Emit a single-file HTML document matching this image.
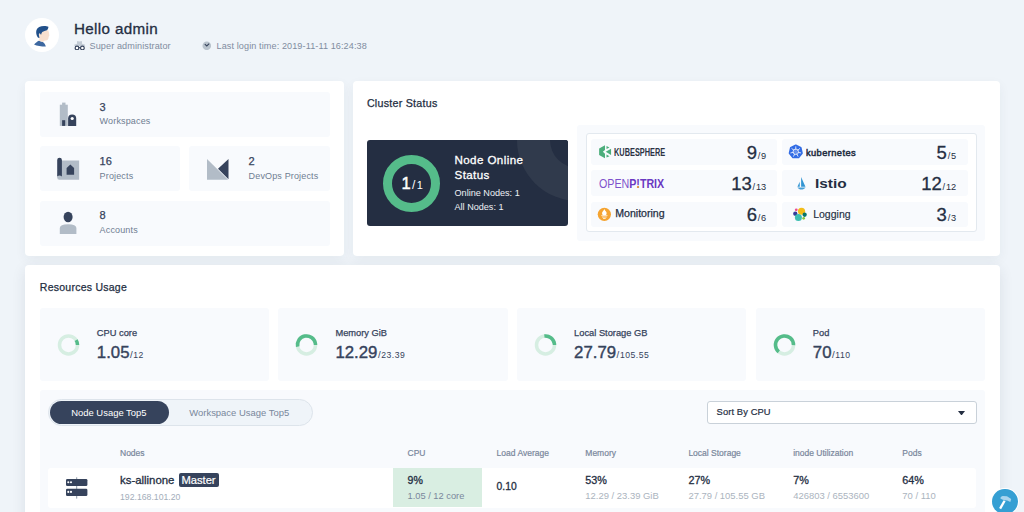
<!DOCTYPE html>
<html><head><meta charset="utf-8">
<style>
*{box-sizing:border-box;margin:0;padding:0}
html,body{width:1024px;height:512px;overflow:hidden}
body{background:#eff4f9;font-family:"Liberation Sans",sans-serif;color:#242e42;position:relative}
.a{position:absolute;display:block}
.t{position:absolute;white-space:nowrap;line-height:1}
</style></head>
<body>
<div class="a" style="left:25px;top:18px;width:34.3px;height:34.3px;border-radius:50%;background:#fff"></div>
<svg class="a" style="left:25px;top:18px;" width="34.3" height="34.3" viewBox="-106.7 -85.3 731.7 731.7">
<path d="M87 480 C120 440 160 410 190 398 L272 425 C302 445 325 475 337 525 C260 527 150 512 87 480Z" fill="#3d68a0"/>
<path d="M185 300 C180 260 190 235 215 235 C240 215 270 200 300 192 C340 182 370 175 390 178 C405 220 410 260 412 292 C400 302 396 322 393 350 C386 382 345 396 305 400 C290 410 280 422 272 425 L188 398 C205 375 205 340 185 300Z" fill="#f8e0cf"/>
<path d="M172 338 C135 290 122 230 138 172 C158 110 220 84 300 84 C340 84 372 90 392 102 C394 127 382 156 362 176 C330 192 292 197 262 212 C248 228 243 250 235 278 C225 258 215 242 200 240 C185 245 185 290 205 335Z" fill="#21508a"/>
</svg>
<div class="t" style="left:74.00px;top:20.98px;font-size:15.2px;color:#242e42;font-weight:400;-webkit-text-stroke:0.3px #242e42;letter-spacing:0.35px">Hello admin</div>
<svg class="a" style="left:74px;top:40px;" width="11" height="10" viewBox="0 0 11 10">
<path d="M3.2 1.1 L5.5 1.6 L7.8 1.1 L8.2 3.9 L10.8 4.6 L10.8 5.9 L0.4 5.9 L0.4 4.6 L2.8 3.9Z" fill="#c2cbd5"/>
<circle cx="3" cy="7.9" r="1.85" fill="#fff" stroke="#36435c" stroke-width="1.15"/>
<circle cx="8.4" cy="7.9" r="1.85" fill="#fff" stroke="#36435c" stroke-width="1.15"/>
<path d="M4.9 7.6 L6.5 7.6" stroke="#36435c" stroke-width="1"/>
</svg>
<div class="t" style="left:89.50px;top:41.56px;font-size:9.1px;color:#7f8ca0;font-weight:400;letter-spacing:0.1px">Super administrator</div>
<svg class="a" style="left:201.5px;top:40.6px;" width="9.6" height="9.6" viewBox="0 0 10 10">
<circle cx="5" cy="5" r="4.5" fill="#b9c3cd"/>
<path d="M2.9 3.2 L5 5.2 L7.5 2.7" fill="none" stroke="#36435c" stroke-width="1.1"/>
</svg>
<div class="t" style="left:216.50px;top:41.56px;font-size:9.1px;color:#7f8ca0;font-weight:400;letter-spacing:0.1px">Last login time: 2019-11-11 16:24:38</div>
<div class="a" style="left:25px;top:81px;width:319.3px;height:175px;background:#fff;border-radius:4px;box-shadow:0 4px 12px rgba(36,46,66,0.055)"></div>
<div class="a" style="left:353px;top:81px;width:647px;height:175px;background:#fff;border-radius:4px;box-shadow:0 4px 12px rgba(36,46,66,0.055)"></div>
<div class="a" style="left:25px;top:265px;width:974.5px;height:270px;background:#fff;border-radius:4px;box-shadow:0 4px 14px rgba(36,46,66,0.1)"></div>
<div class="a" style="left:39.5px;top:91.8px;width:290.5px;height:45.2px;background:#f8fafd;border-radius:3px"></div>
<div class="a" style="left:39.5px;top:146.2px;width:140.7px;height:45.2px;background:#f8fafd;border-radius:3px"></div>
<div class="a" style="left:189.3px;top:146.2px;width:140.7px;height:45.2px;background:#f8fafd;border-radius:3px"></div>
<div class="a" style="left:39.5px;top:200.6px;width:290.5px;height:45.2px;background:#f8fafd;border-radius:3px"></div>
<svg class="a" style="left:55px;top:100px;" width="25" height="28" viewBox="55 100 25 28">
<rect x="62.1" y="102.6" width="3.4" height="2.5" fill="#b2bcc7"/>
<rect x="59.8" y="104.7" width="8" height="21.2" fill="#b2bcc7"/>
<rect x="62.1" y="120.2" width="3.1" height="5.7" fill="#36435c"/>
<path d="M68.1 125.9 L68.1 118.6 A4.05 4.05 0 0 1 76.2 118.6 L76.2 125.9Z" fill="#36435c"/>
<circle cx="72.2" cy="118.5" r="1.6" fill="#fff"/>
</svg>
<div class="t" style="left:99.60px;top:101.65px;font-size:11px;color:#36435c;font-weight:400;-webkit-text-stroke:0.25px #36435c;">3</div>
<div class="t" style="left:99.60px;top:117.35px;font-size:9.0px;color:#6f7d92;font-weight:400;letter-spacing:0.15px">Workspaces</div>
<svg class="a" style="left:55px;top:155px;" width="26" height="27" viewBox="55 155 26 27">
<path d="M59.5 160.5 L79.1 160.5 L79.1 179.7 L59.3 179.7 Q57.2 179.7 57.2 177.5Z" fill="#b2bcc7"/>
<path d="M57.2 159.9 Q57.2 157.8 59.55 157.8 Q61.9 157.8 61.9 159.9 L61.9 176.5 Q59.5 174.5 57.2 176.5Z" fill="#36435c"/>
<path d="M66.6 168.1 L70.35 164.5 L74.1 168.1 L74.1 174.8 L66.6 174.8Z" fill="#36435c"/>
</svg>
<div class="t" style="left:99.60px;top:156.25px;font-size:11px;color:#36435c;font-weight:400;-webkit-text-stroke:0.25px #36435c;">16</div>
<div class="t" style="left:99.60px;top:171.75px;font-size:9.0px;color:#6f7d92;font-weight:400;letter-spacing:0.15px">Projects</div>
<svg class="a" style="left:205px;top:157px;" width="26" height="25" viewBox="205 157 26 25">
<path d="M207 159 L207 179.7 L228.1 179.7Z" fill="#b2bcc7"/>
<path d="M228.5 159 L228.5 179.3 L218 168.75Z" fill="#36435c"/>
</svg>
<div class="t" style="left:248.60px;top:156.25px;font-size:11px;color:#36435c;font-weight:400;-webkit-text-stroke:0.25px #36435c;">2</div>
<div class="t" style="left:248.60px;top:171.75px;font-size:9.0px;color:#6f7d92;font-weight:400;letter-spacing:0.15px">DevOps Projects</div>
<svg class="a" style="left:57px;top:209px;" width="22" height="27" viewBox="57 209 22 27">
<ellipse cx="68.1" cy="217" rx="4.5" ry="5.3" fill="#36435c"/>
<path d="M59.8 234 L59.8 228 Q59.8 224.2 68.1 224.2 Q76.4 224.2 76.4 228 L76.4 234Z" fill="#b2bcc7"/>
</svg>
<div class="t" style="left:99.60px;top:210.45px;font-size:11px;color:#36435c;font-weight:400;-webkit-text-stroke:0.25px #36435c;">8</div>
<div class="t" style="left:99.60px;top:226.15px;font-size:9.0px;color:#6f7d92;font-weight:400;letter-spacing:0.15px">Accounts</div>
<div class="t" style="left:366.90px;top:98.20px;font-size:10.7px;color:#242e42;font-weight:400;-webkit-text-stroke:0.25px #242e42;letter-spacing:0.25px">Cluster Status</div>
<div class="a" style="left:367px;top:140px;width:201px;height:85.5px;background:#242e42;border-radius:3px;overflow:hidden"><div class="a" style="left:150px;top:-61px;width:122px;height:122px;border-radius:50%;background:#303a4c"></div><div class="a" style="left:183px;top:-28px;width:56px;height:56px;border-radius:50%;background:#242e42"></div></div>
<svg class="a" style="left:383px;top:154.5px;" width="57" height="57" viewBox="0 0 57 57"><circle cx="28.5" cy="28.5" r="24" fill="none" stroke="#55bc8a" stroke-width="9"/></svg>
<div class="t" style="left:401.5px;top:174.78px;color:#fff"><span style="font-size:16.5px;-webkit-text-stroke:0.45px #fff">1</span><span style="font-size:12px;margin:0 1.6px 0 1.2px">/</span><span style="font-size:11px">1</span></div>
<div class="t" style="left:454.50px;top:153.74px;font-size:11.6px;color:#fff;font-weight:400;-webkit-text-stroke:0.3px #fff;letter-spacing:0.4px">Node Online</div>
<div class="t" style="left:454.50px;top:168.94px;font-size:11.6px;color:#fff;font-weight:400;-webkit-text-stroke:0.3px #fff;letter-spacing:0.4px">Status</div>
<div class="t" style="left:454.50px;top:188.87px;font-size:9.1px;color:#eef1f5;font-weight:400;">Online Nodes: 1</div>
<div class="t" style="left:454.50px;top:203.26px;font-size:9.1px;color:#eef1f5;font-weight:400;">All Nodes: 1</div>
<div class="a" style="left:577px;top:124.5px;width:407.6px;height:116.8px;background:#f8fafd;border-radius:3px"></div>
<div class="a" style="left:585.5px;top:133.4px;width:391px;height:99px;background:#fff;border:1px solid #e3e9ef;border-radius:3px"></div>
<div class="a" style="left:591.3px;top:139.4px;width:185.5px;height:25.7px;background:#f8fafd;border-radius:3px"></div>
<div class="a" style="left:782.1px;top:139.4px;width:185.5px;height:25.7px;background:#f8fafd;border-radius:3px"></div>
<div class="a" style="left:591.3px;top:170.3px;width:185.5px;height:25.7px;background:#f8fafd;border-radius:3px"></div>
<div class="a" style="left:782.1px;top:170.3px;width:185.5px;height:25.7px;background:#f8fafd;border-radius:3px"></div>
<div class="a" style="left:591.3px;top:201.5px;width:185.5px;height:25.7px;background:#f8fafd;border-radius:3px"></div>
<div class="a" style="left:782.1px;top:201.5px;width:185.5px;height:25.7px;background:#f8fafd;border-radius:3px"></div>
<div class="t" style="right:257.80px;top:143.88px;color:#242e42"><span style="font-size:18.5px;-webkit-text-stroke:0.3px #242e42;letter-spacing:0px">9</span><span style="font-size:9.2px;margin:0 0.8px 0 0.8px">/</span><span style="font-size:9.2px">9</span></div>
<div class="t" style="right:67.90px;top:143.88px;color:#242e42"><span style="font-size:18.5px;-webkit-text-stroke:0.3px #242e42;letter-spacing:0px">5</span><span style="font-size:9.2px;margin:0 0.8px 0 0.8px">/</span><span style="font-size:9.2px">5</span></div>
<div class="t" style="right:257.80px;top:174.88px;color:#242e42"><span style="font-size:18.5px;-webkit-text-stroke:0.3px #242e42;letter-spacing:0px">13</span><span style="font-size:9.2px;margin:0 0.8px 0 0.8px">/</span><span style="font-size:9.2px">13</span></div>
<div class="t" style="right:67.90px;top:174.88px;color:#242e42"><span style="font-size:18.5px;-webkit-text-stroke:0.3px #242e42;letter-spacing:0px">12</span><span style="font-size:9.2px;margin:0 0.8px 0 0.8px">/</span><span style="font-size:9.2px">12</span></div>
<div class="t" style="right:257.80px;top:205.97px;color:#242e42"><span style="font-size:18.5px;-webkit-text-stroke:0.3px #242e42;letter-spacing:0px">6</span><span style="font-size:9.2px;margin:0 0.8px 0 0.8px">/</span><span style="font-size:9.2px">6</span></div>
<div class="t" style="right:67.90px;top:205.97px;color:#242e42"><span style="font-size:18.5px;-webkit-text-stroke:0.3px #242e42;letter-spacing:0px">3</span><span style="font-size:9.2px;margin:0 0.8px 0 0.8px">/</span><span style="font-size:9.2px">3</span></div>
<svg class="a" style="left:596px;top:142px;" width="20" height="20" viewBox="0 0 512 512"><g fill="#4cae7c">
<path d="M80 165 L230 80 L230 205 L175 250 L230 298 L230 415 L80 335Z"/>
<path d="M268 100 L345 142 L268 178Z"/>
<path d="M250 250 L385 172 L385 330Z"/>
<path d="M268 322 L345 362 L268 398Z"/></g></svg>
<svg class="a" style="left:613.8px;top:146px;" width="52" height="12" viewBox="0 0 52 12"><text x="0" y="9.5" textLength="51.2" lengthAdjust="spacingAndGlyphs" font-family="Liberation Sans" font-weight="700" font-size="10.2" fill="#2b3344">KUBESPHERE</text></svg>
<svg class="a" style="left:598.5px;top:176px;" width="68" height="14" viewBox="0 0 68 14"><text x="0" y="11.6" textLength="65.2" lengthAdjust="spacingAndGlyphs" font-family="Liberation Sans" font-size="12.2" fill="#7e52cc"><tspan font-weight="400">OPEN</tspan><tspan font-weight="700" fill="#6a38c2">P!TRIX</tspan></text></svg>
<div class="t" style="left:615.20px;top:207.79px;font-size:10.6px;color:#242e42;font-weight:400;-webkit-text-stroke:0.25px #242e42;">Monitoring</div>
<svg class="a" style="left:594px;top:204px;" width="20" height="20" viewBox="0 0 512 512"><circle cx="265" cy="265" r="170" fill="#f5a431"/>
<path d="M265 125 C255 160 235 165 225 190 C205 205 205 240 210 262 C215 275 225 282 232 285 L298 285 C305 282 315 275 320 262 C325 240 325 205 305 190 C295 165 275 160 265 125Z" fill="#fff"/>
<rect x="185" y="292" width="160" height="18" fill="#fff"/>
<rect x="205" y="325" width="120" height="18" fill="#fff"/>
<rect x="230" y="358" width="70" height="22" rx="8" fill="#fff"/></svg>
<svg class="a" style="left:786px;top:142px;" width="20" height="20" viewBox="0 0 512 512"><path d="M250 85 L379 147 L411 287 L322 399 L178 399 L89 287 L121 147Z" fill="#326ce5" stroke="#326ce5" stroke-width="40" stroke-linejoin="round"/>
<g stroke="#dfe8fb" stroke-width="24" stroke-linecap="round"><line x1="250" y1="195" x2="250" y2="122"/><line x1="293" y1="216" x2="350" y2="170"/><line x1="304" y1="262" x2="375" y2="278"/><line x1="274" y1="300" x2="306" y2="365"/><line x1="226" y1="300" x2="194" y2="365"/><line x1="196" y1="262" x2="125" y2="278"/><line x1="207" y1="216" x2="150" y2="170"/></g>
<circle cx="250" cy="250" r="70" fill="none" stroke="#dfe8fb" stroke-width="24"/><circle cx="250" cy="250" r="45" fill="#6b93ec"/></svg>
<svg class="a" style="left:806.4px;top:146px;" width="52" height="12" viewBox="0 0 52 12"><text x="0" y="9.7" textLength="49.6" lengthAdjust="spacing" font-family="Liberation Sans" font-weight="400" font-size="9.3" fill="#242e42" stroke="#242e42" stroke-width="0.5">kubernetes</text></svg>
<svg class="a" style="left:790px;top:173px;" width="20" height="20" viewBox="0 0 512 512"><g fill="#3295d3">
<path d="M285 100 L395 350 L285 350Z"/><path d="M250 225 L250 350 L190 350Z"/>
<path d="M190 370 L400 370 C380 400 330 425 290 425 C250 425 210 400 190 370Z" opacity="0.9"/></g></svg>
<svg class="a" style="left:814.6px;top:175.7px;" width="34" height="14" viewBox="0 0 34 14"><text x="0" y="12.2" textLength="31.7" lengthAdjust="spacingAndGlyphs" font-family="Liberation Sans" font-weight="700" font-size="13.3" fill="#242e42">Istio</text></svg>
<svg class="a" style="left:790px;top:204px;" width="20" height="20" viewBox="0 0 512 512"><circle cx="295" cy="185" r="92" fill="#f3bd19"/>
<circle cx="375" cy="275" r="55" fill="#07756b"/>
<circle cx="135" cy="250" r="55" fill="#343d9b"/>
<circle cx="160" cy="150" r="36" fill="#ec4f8d"/>
<circle cx="350" cy="365" r="35" fill="#8cc63f"/>
<circle cx="215" cy="345" r="90" fill="#3dbeb1"/></svg>
<div class="t" style="left:813.20px;top:208.97px;font-size:10.5px;color:#242e42;font-weight:400;-webkit-text-stroke:0.15px #242e42;">Logging</div>
<div class="t" style="left:39.80px;top:281.68px;font-size:10.5px;color:#242e42;font-weight:400;-webkit-text-stroke:0.25px #242e42;letter-spacing:0.25px">Resources Usage</div>
<div class="a" style="left:39.6px;top:308px;width:229.5px;height:73.3px;background:#f8fafd;border-radius:3px"></div>
<svg class="a" style="left:39.6px;top:308px;" width="60" height="73" viewBox="0 0 60 73"><circle cx="28.5" cy="36.9" r="9.0" fill="none" stroke="#d6eee2" stroke-width="3.5"/><circle cx="28.5" cy="36.9" r="9.0" fill="none" stroke="#55bc8a" stroke-width="3.5" stroke-dasharray="5.09 56.55" transform="rotate(-32.4 28.5 36.9)"/></svg>
<div class="t" style="left:96.80px;top:329.40px;font-size:9.3px;color:#36435c;font-weight:400;-webkit-text-stroke:0.25px #36435c;">CPU core</div>
<div class="t" style="left:96.80px;top:344.82px;color:#36435c"><span style="font-size:16.8px;-webkit-text-stroke:0.4px #36435c">1.05</span><span style="font-size:9.6px;margin:0 0.7px 0 0.5px">/</span><span style="font-size:8.6px;letter-spacing:0.5px">12</span></div>
<div class="a" style="left:278.2px;top:308px;width:229.5px;height:73.3px;background:#f8fafd;border-radius:3px"></div>
<svg class="a" style="left:278.2px;top:308px;" width="60" height="73" viewBox="0 0 60 73"><circle cx="28.5" cy="36.9" r="9.0" fill="none" stroke="#d6eee2" stroke-width="3.5"/><circle cx="28.5" cy="36.9" r="9.0" fill="none" stroke="#55bc8a" stroke-width="3.5" stroke-dasharray="29.97 56.55" transform="rotate(-190.8 28.5 36.9)"/></svg>
<div class="t" style="left:335.40px;top:329.40px;font-size:9.3px;color:#36435c;font-weight:400;-webkit-text-stroke:0.25px #36435c;">Memory GiB</div>
<div class="t" style="left:335.40px;top:344.82px;color:#36435c"><span style="font-size:16.8px;-webkit-text-stroke:0.4px #36435c">12.29</span><span style="font-size:9.6px;margin:0 0.7px 0 0.5px">/</span><span style="font-size:8.6px;letter-spacing:0.5px">23.39</span></div>
<div class="a" style="left:516.9px;top:308px;width:229.5px;height:73.3px;background:#f8fafd;border-radius:3px"></div>
<svg class="a" style="left:516.9px;top:308px;" width="60" height="73" viewBox="0 0 60 73"><circle cx="28.5" cy="36.9" r="9.0" fill="none" stroke="#d6eee2" stroke-width="3.5"/><circle cx="28.5" cy="36.9" r="9.0" fill="none" stroke="#55bc8a" stroke-width="3.5" stroke-dasharray="15.27 56.55" transform="rotate(-97.2 28.5 36.9)"/></svg>
<div class="t" style="left:574.10px;top:329.40px;font-size:9.3px;color:#36435c;font-weight:400;-webkit-text-stroke:0.25px #36435c;">Local Storage GB</div>
<div class="t" style="left:574.10px;top:344.82px;color:#36435c"><span style="font-size:16.8px;-webkit-text-stroke:0.4px #36435c">27.79</span><span style="font-size:9.6px;margin:0 0.7px 0 0.5px">/</span><span style="font-size:8.6px;letter-spacing:0.5px">105.55</span></div>
<div class="a" style="left:755.6px;top:308px;width:229.5px;height:73.3px;background:#f8fafd;border-radius:3px"></div>
<svg class="a" style="left:755.6px;top:308px;" width="60" height="73" viewBox="0 0 60 73"><circle cx="28.5" cy="36.9" r="9.0" fill="none" stroke="#d6eee2" stroke-width="3.5"/><circle cx="28.5" cy="36.9" r="9.0" fill="none" stroke="#55bc8a" stroke-width="3.5" stroke-dasharray="36.19 56.55" transform="rotate(-230.4 28.5 36.9)"/></svg>
<div class="t" style="left:812.80px;top:329.40px;font-size:9.3px;color:#36435c;font-weight:400;-webkit-text-stroke:0.25px #36435c;">Pod</div>
<div class="t" style="left:812.80px;top:344.82px;color:#36435c"><span style="font-size:16.8px;-webkit-text-stroke:0.4px #36435c">70</span><span style="font-size:9.6px;margin:0 0.7px 0 0.5px">/</span><span style="font-size:8.6px;letter-spacing:0.5px">110</span></div>
<div class="a" style="left:40.4px;top:390.4px;width:944.2px;height:140px;background:#f8fafd;border-radius:3px"></div>
<div class="a" style="left:47.9px;top:399px;width:265px;height:27px;background:#eff4f9;border:1px solid #dde4eb;border-radius:14px"></div>
<div class="a" style="left:49.9px;top:401.3px;width:119px;height:22.7px;background:#36435c;border-radius:12px"></div>
<div class="t" style="left:71.20px;top:407.57px;font-size:9.45px;color:#fff;font-weight:400;">Node Usage Top5</div>
<div class="t" style="left:189.30px;top:407.57px;font-size:9.45px;color:#79879c;font-weight:400;">Workspace Usage Top5</div>
<div class="a" style="left:707.3px;top:401px;width:269.4px;height:22.8px;background:#fff;border:1px solid #c9d1d9;border-radius:3px"></div>
<div class="t" style="left:716.60px;top:408.25px;font-size:9.35px;color:#242e42;font-weight:400;-webkit-text-stroke:0.2px #242e42;letter-spacing:0.1px">Sort By CPU</div>
<svg class="a" style="left:958px;top:410.5px;" width="7" height="4.5" viewBox="0 0 7 4.5"><path d="M0 0 L7 0 L3.5 4.5Z" fill="#242e42"/></svg>
<div class="t" style="left:120.00px;top:448.77px;font-size:8.5px;color:#79879c;font-weight:400;-webkit-text-stroke:0.2px #79879c;">Nodes</div>
<div class="t" style="left:407.50px;top:448.77px;font-size:8.5px;color:#79879c;font-weight:400;-webkit-text-stroke:0.2px #79879c;">CPU</div>
<div class="t" style="left:496.60px;top:448.77px;font-size:8.5px;color:#79879c;font-weight:400;-webkit-text-stroke:0.2px #79879c;">Load Average</div>
<div class="t" style="left:585.30px;top:448.77px;font-size:8.5px;color:#79879c;font-weight:400;-webkit-text-stroke:0.2px #79879c;">Memory</div>
<div class="t" style="left:688.40px;top:448.77px;font-size:8.5px;color:#79879c;font-weight:400;-webkit-text-stroke:0.2px #79879c;">Local Storage</div>
<div class="t" style="left:793.20px;top:448.77px;font-size:8.5px;color:#79879c;font-weight:400;-webkit-text-stroke:0.2px #79879c;">inode Utilization</div>
<div class="t" style="left:902.30px;top:448.77px;font-size:8.5px;color:#79879c;font-weight:400;-webkit-text-stroke:0.2px #79879c;">Pods</div>
<div class="a" style="left:47.6px;top:468px;width:928.4px;height:40px;background:#fff;border-radius:3px"></div>
<div class="a" style="left:393.1px;top:467.5px;width:88.8px;height:39.7px;background:#d9eee2"></div>
<svg class="a" style="left:64px;top:474px;" width="26" height="28" viewBox="64 474 26 28"><rect x="76.2" y="477.3" width="1" height="21.3" fill="#8d99a8"/>
<rect x="66" y="478.9" width="21.4" height="7.2" rx="1.3" fill="#36435c"/>
<rect x="66" y="488.7" width="21.4" height="7.3" rx="1.3" fill="#36435c"/>
<circle cx="68.3" cy="482.2" r="1.05" fill="#fff"/><circle cx="71.0" cy="482.2" r="1.05" fill="#fff"/>
<circle cx="68.3" cy="491.9" r="1.05" fill="#fff"/><circle cx="71.0" cy="491.9" r="1.05" fill="#fff"/></svg>
<div class="t" style="left:120.00px;top:475.31px;font-size:11.4px;color:#242e42;font-weight:400;-webkit-text-stroke:0.3px #242e42;">ks-allinone</div>
<div class="a" style="left:178.8px;top:473px;width:40.2px;height:14.2px;background:#36435c;border-radius:2px"></div>
<div class="t" style="left:181.40px;top:474.88px;font-size:11.2px;color:#fff;font-weight:400;-webkit-text-stroke:0.2px #fff;">Master</div>
<div class="t" style="left:120.00px;top:492.50px;font-size:8.7px;color:#a3adba;font-weight:400;">192.168.101.20</div>
<div class="t" style="left:407.50px;top:474.74px;font-size:10.6px;color:#242e42;font-weight:400;-webkit-text-stroke:0.3px #242e42;">9%</div>
<div class="t" style="left:407.50px;top:491.50px;font-size:9.3px;color:#79879c;font-weight:400;">1.05 / 12 core</div>
<div class="t" style="left:496.60px;top:482.44px;font-size:10.3px;color:#242e42;font-weight:400;-webkit-text-stroke:0.3px #242e42;">0.10</div>
<div class="t" style="left:585.30px;top:474.57px;font-size:10.8px;color:#242e42;font-weight:400;-webkit-text-stroke:0.3px #242e42;">53%</div>
<div class="t" style="left:585.30px;top:491.37px;font-size:9.45px;color:#abb4be;font-weight:400;">12.29 / 23.39 GiB</div>
<div class="t" style="left:688.40px;top:474.57px;font-size:10.8px;color:#242e42;font-weight:400;-webkit-text-stroke:0.3px #242e42;">27%</div>
<div class="t" style="left:688.40px;top:491.37px;font-size:9.45px;color:#abb4be;font-weight:400;">27.79 / 105.55 GB</div>
<div class="t" style="left:793.20px;top:474.57px;font-size:10.8px;color:#242e42;font-weight:400;-webkit-text-stroke:0.3px #242e42;">7%</div>
<div class="t" style="left:793.20px;top:491.37px;font-size:9.45px;color:#abb4be;font-weight:400;">426803 / 6553600</div>
<div class="t" style="left:902.30px;top:474.57px;font-size:10.8px;color:#242e42;font-weight:400;-webkit-text-stroke:0.3px #242e42;">64%</div>
<div class="t" style="left:902.30px;top:491.37px;font-size:9.45px;color:#abb4be;font-weight:400;">70 / 110</div>
<div class="a" style="left:991px;top:487.5px;width:27.8px;height:27.8px;border-radius:50%;background:#fff"></div>
<div class="a" style="left:992px;top:488.5px;width:25.8px;height:25.8px;border-radius:50%;background:#359fd3"></div>
<svg class="a" style="left:992px;top:488.5px;" width="26" height="24" viewBox="0 0 26 24"><path d="M12.6 11.8 L8.1 19.6" stroke="#fff" stroke-width="2.3" stroke-linecap="butt"/><path d="M8.2 9.2 Q8.8 7.3 10.6 6.9 L15 7.3 L19.2 10 L18.3 12.9 L15.2 11.6 L12.6 11.2 Q10 10.9 8.2 9.2Z" fill="#a9d5ee"/></svg>
<div class="a" style="left:636.9px;top:185.7px;width:2.1px;height:2.2px;background:#f5a623;border-radius:1px"></div>
</body></html>
